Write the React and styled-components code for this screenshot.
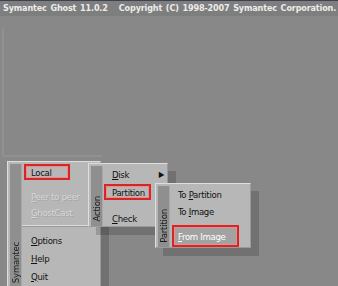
import React from "react";
import styled, { createGlobalStyle } from "styled-components";

const GlobalStyle = createGlobalStyle`
  html, body {
    margin: 0;
    padding: 0;
    background: #888888;
    overflow: hidden;
  }
  #root {
    width: 338px;
    height: 286px;
  }
`;

const Screen = styled.div`
  width: 338px;
  height: 286px;
  display: flex;
  flex-direction: column;
  overflow: hidden;
  background: #888888;
  font-family: "DejaVu Sans Condensed", "DejaVu Sans", sans-serif;
`;

const TitleBar = styled.div`
  height: 15px;
  flex-shrink: 0;
  background: #7e7e7e;
  border-top: 1px solid #3c4252;
  color: #ececec;
  font-size: 9px;
  font-weight: bold;
  line-height: 15px;
  padding-left: 3px;
  white-space: nowrap;
  overflow: hidden;
  letter-spacing: -0.15px;
  word-spacing: 1px;
`;

const Desktop = styled.div`
  position: relative;
  flex: 1;
`;

const OldFrame = styled.div`
  position: absolute;
  left: 2px;
  top: 12px;
  width: 98px;
  height: 127px;
  border-left: 2px solid #919191;
  border-bottom: 2px solid #919191;
`;

const Menu = styled.div`
  position: absolute;
  left: ${(p) => p.$x}px;
  top: ${(p) => p.$y}px;
  width: ${(p) => p.$w}px;
  height: ${(p) => p.$h}px;
  box-sizing: border-box;
  display: flex;
  padding: 2px 0 0 2px;
  background: #b7b7b7;
  border-top: 1px solid #dedede;
  border-left: 1px solid #dedede;
  border-right: 1px solid #9a9a9a;
  border-bottom: 1px solid #9a9a9a;
  box-shadow: 8px 8px 0 rgba(0, 0, 0, 0.17);
`;

const Strip = styled.div`
  width: 12px;
  flex-shrink: 0;
  background: #8f8f8f;
  border-right: 1px solid #a8a8a8;
  box-sizing: border-box;
  display: flex;
  flex-direction: column;
  justify-content: flex-end;
  align-items: center;
  padding-bottom: ${(p) => p.$pad}px;
`;

const StripLabel = styled.span`
  writing-mode: vertical-rl;
  transform: rotate(180deg);
  font-size: 9.5px;
  color: #1c1c1c;
  letter-spacing: -0.2px;
  white-space: nowrap;
`;

const Items = styled.div`
  flex: 1;
  display: flex;
  flex-direction: column;
  padding-left: ${(p) => p.$pad}px;
`;

const Item = styled.div`
  height: ${(p) => p.$h || 16}px;
  margin-top: ${(p) => p.$mt || 0}px;
  margin-right: ${(p) => p.$mr || 0}px;
  box-sizing: border-box;
  display: flex;
  align-items: center;
  justify-content: space-between;
  padding-left: ${(p) => (p.$marked ? p.$pl - 2 : p.$pl)}px;
  padding-right: 3px;
  font-size: 9.5px;
  letter-spacing: -0.3px;
  white-space: nowrap;
  color: ${(p) => (p.$disabled ? "#d6d6d6" : p.$active ? "#ffffff" : "#111111")};
  text-shadow: ${(p) => (p.$disabled ? "1px 1px 0 #a6a6a6" : "none")};
  background: ${(p) => (p.$active ? "#a2a2a2" : "transparent")};
  border: ${(p) => (p.$marked ? "2px solid #d82626" : "none")};
  outline: ${(p) => (p.$marked ? "1px solid #e88c8c" : "none")};
  outline-offset: -3px;
`;

const Key = styled.span`
  text-decoration: underline;
  text-underline-offset: 1px;
`;

const Arrow = styled.span`
  font-size: 8px;
  color: #111111;
`;

const Separator = styled.div`
  height: 12px;
  display: flex;
  align-items: center;
  margin-left: -2px;
  &::after {
    content: "";
    flex: 1;
    border-top: 1px solid #dadada;
    border-bottom: 1px solid #9c9c9c;
  }
`;

const Label = ({ k, rest }) => (
  <span>
    <Key>{k}</Key>
    {rest}
  </span>
);

const App = () => {
  return (
    <>
      <GlobalStyle />
      <Screen>
        <TitleBar>
          Symantec Ghost 11.0.2&nbsp;&nbsp;&nbsp;Copyright (C) 1998-2007 Symantec Corporation. All rights reserved.
        </TitleBar>
        <Desktop>
          <OldFrame />

          <Menu $x={7} $y={145} $w={94} $h={130}>
            <Strip $pad={7}>
              <StripLabel>Symantec</StripLabel>
            </Strip>
            <Items $pad={2}>
              <Item $pl={7} $marked $mr={30}>
                <Label k="L" rest="ocal" />
              </Item>
              <Item $pl={7} $mt={8} $disabled>
                <Label k="P" rest="eer to peer" />
              </Item>
              <Item $pl={7} $disabled>
                <Label k="G" rest="hostCast" />
              </Item>
              <Separator />
              <Item $pl={7} $h={17}>
                <Label k="O" rest="ptions" />
              </Item>
              <Item $pl={7} $h={18}>
                <Label k="H" rest="elp" />
              </Item>
              <Item $pl={7} $h={18}>
                <Label k="Q" rest="uit" />
              </Item>
            </Items>
          </Menu>

          <Menu $x={88} $y={147} $w={80} $h={64}>
            <Strip $pad={4}>
              <StripLabel>Action</StripLabel>
            </Strip>
            <Items $pad={1}>
              <Item $pl={8}>
                <Label k="D" rest="isk" />
                <Arrow>&#9654;</Arrow>
              </Item>
              <Item $pl={8} $mt={2} $marked $mr={16}>
                <Label k="P" rest="artition" />
              </Item>
              <Item $pl={8} $mt={10}>
                <Label k="C" rest="heck" />
              </Item>
            </Items>
          </Menu>

          <Menu $x={155} $y={167} $w={96} $h={65}>
            <Strip $pad={4}>
              <StripLabel>Partition</StripLabel>
            </Strip>
            <Items $pad={2}>
              <Item $pl={6} $mt={1}>
                <span>
                  To <Key>P</Key>artition
                </span>
              </Item>
              <Item $pl={6} $mt={2}>
                <span>
                  To <Key>I</Key>mage
                </span>
              </Item>
              <Item $pl={6} $mt={6} $h={23} $marked $active $mr={11}>
                <Label k="F" rest="rom Image" />
              </Item>
            </Items>
          </Menu>
        </Desktop>
      </Screen>
    </>
  );
};

export default App;
